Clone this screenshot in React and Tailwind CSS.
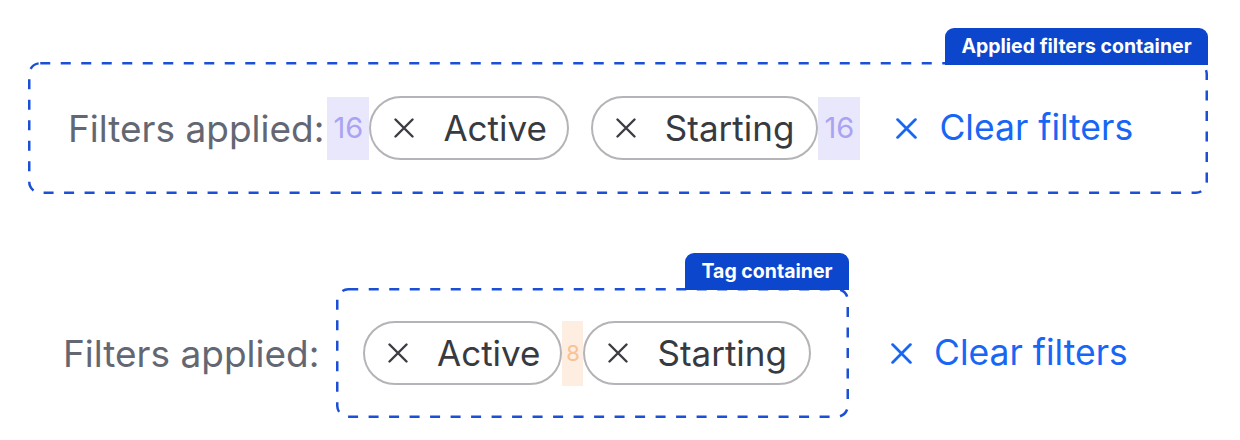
import React from "react";

function XIcon({ className, size = 20, stroke = 2.4 }) {
  return (
    <svg width={size} height={size} viewBox="0 0 20 20" className={className} fill="none">
      <path d="M1.5 1.5L18.5 18.5M18.5 1.5L1.5 18.5" stroke="currentColor" strokeWidth={stroke} strokeLinecap="round" />
    </svg>
  );
}

function DashedFrame({ w, h }) {
  return (
    <svg width={w} height={h} className="absolute left-0 top-0 pointer-events-none" fill="none">
      <rect
        x="1.25"
        y="1.25"
        width={w - 2.5}
        height={h - 2.5}
        rx="11"
        stroke="#1b4fd6"
        strokeWidth="2.5"
        strokeDasharray="10 10.5"
      />
    </svg>
  );
}

function Chip({ label, pr = "pr-[20px]" }) {
  return (
    <div className={`h-[64px] border-2 border-[#b4b4b8] rounded-full flex items-center pl-[23px] ${pr} shrink-0`}>
      <XIcon className="text-[#3b3d43]" />
      <span className="ml-[29px] text-[35px] leading-none text-[#383a41]">{label}</span>
    </div>
  );
}

function Tab({ text, className }) {
  return (
    <div className={`absolute h-[37px] bg-[#0c46cd] rounded-t-[9px] flex items-center justify-center text-white font-bold text-[19.5px] leading-none ${className}`}>
      {text}
    </div>
  );
}

function ClearFilters({ className }) {
  return (
    <div className={`flex items-center text-[#1766f5] shrink-0 ${className}`}>
      <XIcon size={21} stroke={2.6} />
      <span className="ml-[22px] text-[35.5px] leading-none">Clear filters</span>
    </div>
  );
}

export default function App() {
  return (
    <div className="w-[1240px] h-[440px] bg-white font-['Inter',sans-serif] overflow-hidden">
      {/* Top example */}
      <div className="pt-[62px] pl-[28px]">
        <div className="relative w-[1180px] h-[132px] rounded-[12px] flex items-center pl-[40px]">
          <DashedFrame w={1180} h={132} />
          <Tab text="Applied filters container" className="right-0 -top-[34px] w-[263px]" />
          <span className="text-[37px] leading-none text-[#636773] shrink-0">Filters applied:</span>
          <div className="ml-[3px] w-[42px] h-[63px] bg-[#e9e7fc] text-[#a9a3f2] text-[29px] flex items-center justify-center shrink-0">16</div>
          <Chip label="Active" />
          <div className="w-[22px] shrink-0" />
          <Chip label="Starting" pr="pr-[22px]" />
          <div className="w-[42px] h-[63px] bg-[#e9e7fc] text-[#a9a3f2] text-[29px] flex items-center justify-center shrink-0">16</div>
          <ClearFilters className="ml-[36px]" />
        </div>
      </div>

      {/* Bottom example */}
      <div className="mt-[94px] pl-[63px] flex items-center">
        <span className="w-[273px] text-[37px] leading-none text-[#636773] shrink-0">Filters applied:</span>
        <div className="relative w-[513px] h-[130px] rounded-[12px] flex items-center pl-[27px] shrink-0">
          <DashedFrame w={513} h={130} />
          <Tab text="Tag container" className="right-0 -top-[35px] w-[164px]" />
          <Chip label="Active" />
          <div className="w-[21px] h-[65px] bg-[#fdeee1] text-[#f8c293] text-[22px] flex items-center justify-center shrink-0">8</div>
          <Chip label="Starting" pr="pr-[22px]" />
        </div>
        <ClearFilters className="ml-[42px]" />
      </div>
    </div>
  );
}
